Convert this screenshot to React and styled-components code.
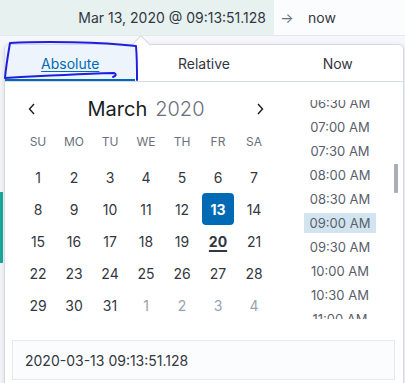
import React from "react";
import styled, { createGlobalStyle } from "styled-components";

const GlobalStyle = createGlobalStyle`
  html, body {
    margin: 0;
    padding: 0;
    background: #f5f7fa;
    font-family: Inter, "Noto Sans", sans-serif;
    color: #343741;
  }
`;

const Page = styled.div`
  position: relative;
  width: 405px;
  height: 383px;
  overflow: hidden;
`;

const TopBar = styled.div`
  display: flex;
  height: 35px;
  border-bottom: 1px solid #e3e7ee;
  background: #fbfcfd;
  font-size: 14px;
`;

const StartDate = styled.div`
  width: 274px;
  background: #e6f1f0;
  display: flex;
  align-items: center;
  justify-content: flex-end;
  padding-right: 8px;
  box-sizing: border-box;
`;

const Arrow = styled.div`
  width: 26px;
  display: flex;
  align-items: center;
  justify-content: center;
  color: #69707d;
`;

const EndDate = styled.div`
  display: flex;
  align-items: center;
  padding-left: 8px;
`;

const Content = styled.div`
  display: flex;
`;

const LeftStrip = styled.div`
  width: 3px;
  height: 71px;
  margin-top: 156px;
  background: #1ba99c;
`;

const Popover = styled.div`
  position: absolute;
  left: 4px;
  top: 44px;
  width: 398px;
  height: 360px;
  background: #fff;
  border: 1px solid #d3dae6;
  border-radius: 5px;
  box-shadow: 0 2px 6px rgba(0, 0, 0, 0.12);
`;

const Beak = styled.div`
  position: absolute;
  left: 129px;
  top: -7px;
  width: 13px;
  height: 13px;
  background: #fff;
  border-left: 1px solid #d3dae6;
  border-top: 1px solid #d3dae6;
  transform: rotate(45deg);
`;

const Tabs = styled.div`
  position: relative;
  display: flex;
  height: 36px;
  border-bottom: 1px solid #d3dae6;
  border-radius: 5px 5px 0 0;
  overflow: hidden;
`;

const Tab = styled.div`
  flex: ${({ $wide }) => ($wide ? "1.05" : "1")};
  display: flex;
  align-items: center;
  justify-content: center;
  font-size: 14px;
  color: ${({ $active }) => ($active ? "#006bb4" : "#343741")};
  text-decoration: ${({ $active }) => ($active ? "underline" : "none")};
  text-underline-offset: 2px;
  background: ${({ $active }) => ($active ? "#eef4fb" : "transparent")};
  box-shadow: ${({ $active }) => ($active ? "inset 0 -2px 0 #006bb4" : "none")};
`;

const Body = styled.div`
  display: flex;
`;

const CalendarCol = styled.div`
  width: 285px;
  padding: 12px 0 0 15px;
  box-sizing: border-box;
`;

const Header = styled.div`
  display: flex;
  align-items: center;
  justify-content: space-between;
  width: 252px;
  height: 30px;
`;

const NavButton = styled.div`
  width: 24px;
  display: flex;
  justify-content: center;
  color: #1a1c21;
`;

const Title = styled.div`
  font-size: 20px;
  font-weight: 400;
  color: #1a1c21;

  & span {
    color: #69707d;
    font-weight: 300;
    margin-left: 8px;
  }
`;

const Grid = styled.div`
  display: grid;
  grid-template-columns: repeat(7, 36px);
  grid-auto-rows: 32px;
  margin-top: 5px;
`;

const DayName = styled.div`
  display: flex;
  align-items: center;
  justify-content: center;
  height: 24px;
  font-size: 12px;
  color: #69707d;
`;

const Day = styled.div`
  display: flex;
  align-items: center;
  justify-content: center;
  font-size: 14px;
  color: ${({ $muted, $selected }) =>
    $selected ? "#fff" : $muted ? "#98a2b3" : "#343741"};
  font-weight: ${({ $selected, $today }) => ($selected || $today ? 700 : 400)};
  text-decoration: ${({ $today }) => ($today ? "underline" : "none")};
  text-underline-offset: 3px;
  text-decoration-thickness: 2px;

  & span {
    display: flex;
    align-items: center;
    justify-content: center;
    width: 32px;
    height: 32px;
    border-radius: 4px;
    background: ${({ $selected }) => ($selected ? "#006bb4" : "transparent")};
  }
`;

const TimeCol = styled.div`
  flex: 1;
  display: flex;
  padding: 18px 0 0 14px;
`;

const TimeList = styled.div`
  width: 72px;
  height: 219px;
  overflow: hidden;
`;

const TimeItems = styled.div`
  display: flex;
  flex-direction: column;
  gap: 4px;
  margin-top: -7px;
`;

const TimeItem = styled.div`
  height: 20px;
  display: flex;
  align-items: center;
  justify-content: center;
  font-size: 13px;
  color: #5a606b;
  background: ${({ $active }) => ($active ? "#d3e4f1" : "transparent")};
`;

const ScrollThumb = styled.div`
  width: 4px;
  height: 29px;
  margin: 64px 0 0 18px;
  background: #a9adb4;
  border-radius: 1px;
`;

const InputRow = styled.div`
  padding: 19px 8px 0 7px;
`;

const Input = styled.div`
  height: 40px;
  border: 1px solid #e4e8ef;
  background: #fbfcfd;
  box-sizing: border-box;
  display: flex;
  align-items: center;
  padding-left: 12px;
  font-size: 14px;
  color: #343741;
`;

const Marker = styled.svg`
  position: absolute;
  left: 0;
  top: 0;
  pointer-events: none;
`;

const dayNames = ["SU", "MO", "TU", "WE", "TH", "FR", "SA"];
const times = [
  "06:30 AM",
  "07:00 AM",
  "07:30 AM",
  "08:00 AM",
  "08:30 AM",
  "09:00 AM",
  "09:30 AM",
  "10:00 AM",
  "10:30 AM",
  "11:00 AM",
];

const days = [
  ...Array.from({ length: 31 }, (_, i) => ({ n: i + 1 })),
  { n: 1, muted: true },
  { n: 2, muted: true },
  { n: 3, muted: true },
  { n: 4, muted: true },
];

const App = () => (
  <Page>
    <GlobalStyle />
    <TopBar>
      <StartDate>Mar 13, 2020 @ 09:13:51.128</StartDate>
      <Arrow>→</Arrow>
      <EndDate>now</EndDate>
    </TopBar>
    <Content>
      <LeftStrip />
    </Content>
    <Popover>
      <Beak />
      <Tabs>
        <Tab $active>Absolute</Tab>
        <Tab $wide>Relative</Tab>
        <Tab>Now</Tab>
      </Tabs>
      <Body>
        <CalendarCol>
          <Header>
            <NavButton>
              <svg width="10" height="16" viewBox="0 0 10 16">
                <path d="M7 3 L2.5 8 L7 13" fill="none" stroke="#1a1c21" strokeWidth="1.4" />
              </svg>
            </NavButton>
            <Title>
              March<span>2020</span>
            </Title>
            <NavButton>
              <svg width="10" height="16" viewBox="0 0 10 16">
                <path d="M3 3 L7.5 8 L3 13" fill="none" stroke="#1a1c21" strokeWidth="1.4" />
              </svg>
            </NavButton>
          </Header>
          <Grid>
            {dayNames.map((d) => (
              <DayName key={d}>{d}</DayName>
            ))}
            {days.map((d, i) => (
              <Day
                key={i}
                $muted={d.muted}
                $selected={!d.muted && d.n === 13}
                $today={!d.muted && d.n === 20}
              >
                <span>{d.n}</span>
              </Day>
            ))}
          </Grid>
        </CalendarCol>
        <TimeCol>
          <TimeList>
            <TimeItems>
              {times.map((t) => (
                <TimeItem key={t} $active={t === "09:00 AM"}>
                  {t}
                </TimeItem>
              ))}
            </TimeItems>
          </TimeList>
          <ScrollThumb />
        </TimeCol>
      </Body>
      <InputRow>
        <Input>2020-03-13 09:13:51.128</Input>
      </InputRow>
    </Popover>
    <Marker width="405" height="383">
      <path
        d="M10 43 C 45 41, 100 42, 136 46 C 137 58, 137 70, 137 80 M10 43 C 8 55, 6 66, 5 78 C 40 76, 80 74, 114 73 Q 118 75 113 77"
        fill="none"
        stroke="#1f1fe0"
        strokeWidth="2"
        strokeLinecap="round"
        strokeLinejoin="round"
      />
    </Marker>
  </Page>
);

export default App;
